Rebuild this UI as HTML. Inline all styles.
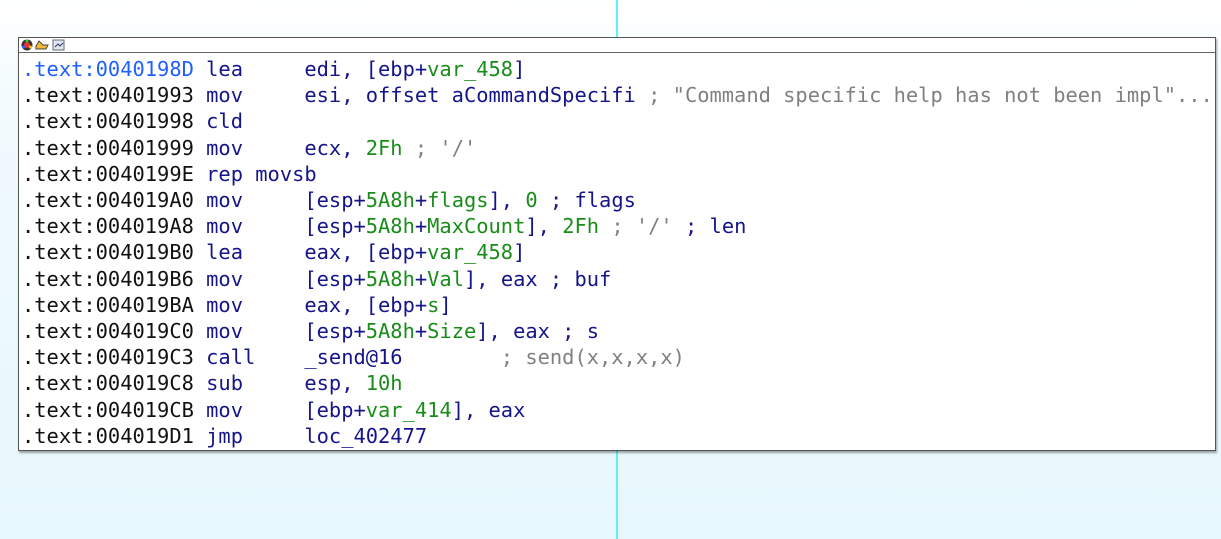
<!DOCTYPE html>
<html><head><style>
body{margin:0;width:1221px;height:539px;overflow:hidden;background:linear-gradient(#ffffff 0px,#f2fbfe 100px,#e6f7fd 539px);position:relative;font-family:"DejaVu Sans Mono","Liberation Mono",monospace}
.vl{position:absolute;left:616px;width:2px;background:#5ff0f8}
.box{position:absolute;left:18px;top:37px;width:1196px;height:412px;background:#fff;border:1px solid #555;box-shadow:1px 2px 2px rgba(0,0,0,.35)}
.hdr{height:14px;border-bottom:1px solid #666;position:relative}
.code{position:absolute;left:3px;top:18px;font-size:20.4px;line-height:26.2px;white-space:pre;color:#111}
.b{color:#15158a}.g{color:#1a8c1a}.c{color:#808080}.a{color:#2060ff}
</style></head><body>
<div class="vl" style="top:0;height:37px"></div>
<div class="vl" style="top:450px;height:89px"></div>
<div class="box">
<div class="hdr">
<svg width="60" height="14" style="position:absolute;left:1px;top:0">
<circle cx="7" cy="7" r="5.5" fill="#333"/><circle cx="7" cy="7" r="3" fill="#e33"/><circle cx="7" cy="3" r="1.5" fill="#3c3"/><circle cx="3.5" cy="9" r="1.5" fill="#36f"/><circle cx="10.5" cy="9" r="1.5" fill="#fc0"/>
<path d="M16 11h10l2-4h-5l-4-4-3 5z" fill="#f5b835" stroke="#444" stroke-width="1"/>
<rect x="33" y="2" width="11" height="10" fill="#dfe8f0" stroke="#667"/><path d="M35 9l3-3 2 2 3-3" stroke="#336" fill="none"/>
</svg>
</div>
<div class="code"><span class="a">.text:0040198D</span> <span class="b">lea     edi, [ebp+</span><span class="g">var_458</span><span class="b">]</span>
.text:00401993 <span class="b">mov     esi, offset aCommandSpecifi</span> <span class="c">; "Command specific help has not been impl"...</span>
.text:00401998 <span class="b">cld</span>
.text:00401999 <span class="b">mov     ecx, </span><span class="g">2Fh</span> <span class="c">; '/'</span>
.text:0040199E <span class="b">rep movsb</span>
.text:004019A0 <span class="b">mov     [esp+</span><span class="g">5A8h</span><span class="b">+</span><span class="g">flags</span><span class="b">], </span><span class="g">0</span> <span class="b">; flags</span>
.text:004019A8 <span class="b">mov     [esp+</span><span class="g">5A8h</span><span class="b">+</span><span class="g">MaxCount</span><span class="b">], </span><span class="g">2Fh</span> <span class="c">; '/'</span> <span class="b">; len</span>
.text:004019B0 <span class="b">lea     eax, [ebp+</span><span class="g">var_458</span><span class="b">]</span>
.text:004019B6 <span class="b">mov     [esp+</span><span class="g">5A8h</span><span class="b">+</span><span class="g">Val</span><span class="b">], eax ; buf</span>
.text:004019BA <span class="b">mov     eax, [ebp+</span><span class="g">s</span><span class="b">]</span>
.text:004019C0 <span class="b">mov     [esp+</span><span class="g">5A8h</span><span class="b">+</span><span class="g">Size</span><span class="b">], eax ; s</span>
.text:004019C3 <span class="b">call    _send@16</span>        <span class="c">; send(x,x,x,x)</span>
.text:004019C8 <span class="b">sub     esp, </span><span class="g">10h</span>
.text:004019CB <span class="b">mov     [ebp+</span><span class="g">var_414</span><span class="b">], eax</span>
.text:004019D1 <span class="b">jmp     loc_402477</span></div>
</div>
</body></html>
